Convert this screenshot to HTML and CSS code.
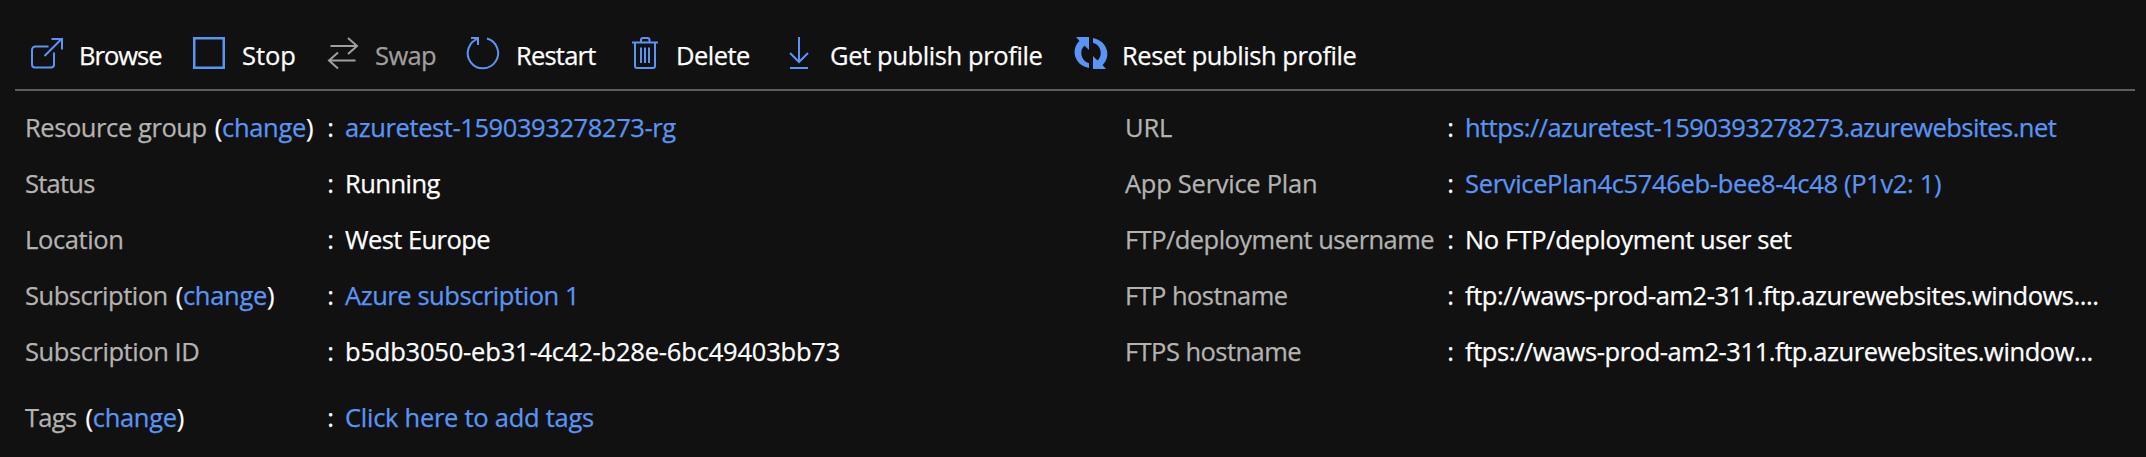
FILE: index.html
```html
<!DOCTYPE html>
<html lang="en">
<head>
<meta charset="utf-8">
<title>App Service</title>
<link rel="stylesheet" href="styles.css">
</head>
<body>
<nav class="toolbar">
  <a class="command"><svg class="icon" viewBox="0 0 32 32"><path d="M17.5 9.5H4.5a3.5 3.5 0 0 0-3.5 3.5v14.5a3 3 0 0 0 3 3h16a3 3 0 0 0 3-3V15.500M13.500 19 31 1.500M20.500 2H31v10.500"/></svg><span class="browse">Browse</span></a>
  <a class="command"><svg class="icon square" viewBox="0 0 32 32"><path d="M1.250 1.250h29.500v29.500H1.250z"/></svg><span class="stop">Stop</span></a>
  <a class="command disabled"><svg class="icon" viewBox="0 0 32 32"><path d="M3.500 9H30M21 1l9 8-9 8M28.500 23.500H2.500M11 15.500l-9 8 9 8"/></svg><span class="swap">Swap</span></a>
  <a class="command"><svg class="icon" viewBox="0 0 32 32"><path d="M20 1.500A15.200 15.200 0 1 1 11.500 1.600M4 1h7v7"/></svg><span class="restart">Restart</span></a>
  <a class="command"><svg class="icon" viewBox="0 0 32 32"><path d="M3 5.500h26M6 5.500V29q0 2 2 2h16q2 0 2-2V5.500M12 5V3q0-2 2-2h4.500q2 0 2 2v2M12 10.500v15.500M16 10.500v15.500M20 10.500v15.500"/></svg><span class="delete">Delete</span></a>
  <a class="command"><svg class="icon" viewBox="0 0 32 32"><path d="M16 0v25.500M7 16l9 9 9-9M7 31h18"/></svg><span class="get">Get publish profile</span></a>
  <a class="command"><svg class="icon filled" viewBox="0 0 32 32"><path d="M1 0h13v13l-4.500-4.500C4 13 5.500 24 14 26.200V31C-1 28-4.500 12 4.500 4zM31 32H18V19l4.500 4.500C28 19 26.500 8 18 5.800V1C33 4 36.500 20 27.500 28z"/></svg><span class="reset">Reset publish profile</span></a>
</nav>
<main class="essentials">
  <dl class="column">
    <div class="row"><dt><span class="group">Resource group</span><span class="change">(<a>change</a>)</span></dt><dd class="link group-value">azuretest-1590393278273-rg</dd></div>
    <div class="row"><dt><span class="status">Status</span></dt><dd class="running">Running</dd></div>
    <div class="row"><dt><span class="location">Location</span></dt><dd class="region">West Europe</dd></div>
    <div class="row"><dt><span class="subscription">Subscription</span><span class="change">(<a>change</a>)</span></dt><dd class="link subscription-value">Azure subscription 1</dd></div>
    <div class="row"><dt><span class="subscription-id">Subscription ID</span></dt><dd class="guid">b5db3050-eb31-4c42-b28e-6bc49403bb73</dd></div>
    <div class="row tags-row"><dt><span class="tags">Tags</span><span class="change">(<a>change</a>)</span></dt><dd class="link add-tags">Click here to add tags</dd></div>
  </dl>
  <dl class="column">
    <div class="row"><dt><span class="url">URL</span></dt><dd class="link url-value">https://azuretest-1590393278273.azurewebsites.net</dd></div>
    <div class="row"><dt><span class="plan">App Service Plan</span></dt><dd class="link plan-value">ServicePlan4c5746eb-bee8-4c48 (P1v2: 1)</dd></div>
    <div class="row"><dt><span class="ftp-user">FTP/deployment username</span></dt><dd class="ftp-user-value">No FTP/deployment user set</dd></div>
    <div class="row"><dt><span class="ftp">FTP hostname</span></dt><dd class="ftp-value">ftp://waws-prod-am2-311.ftp.azurewebsites.windows....</dd></div>
    <div class="row"><dt><span class="ftps">FTPS hostname</span></dt><dd class="ftps-value">ftps://waws-prod-am2-311.ftp.azurewebsites.window...</dd></div>
  </dl>
</main>
</body>
</html>
```
FILE: styles.css
```css
* { box-sizing: border-box; }
body {
  margin: 0;
  height: 457px;
  overflow: hidden;
  background: #111;
  color: #fff;
  font: 25.5px/56px "Open Sans", "Noto Sans", sans-serif;
  -webkit-text-stroke: .25px currentColor;
  white-space: nowrap;
}
.toolbar {
  display: grid;
  grid-template-columns: 162px 134px 140px 162px 154px 292px auto;
  height: 91px;
  margin: 0 11px 0 15px;
  padding: 27px 0 0 16px;
  border-bottom: 2px solid #605e5d;
}
.command { display: flex; gap: 16px; height: 56px; }
.icon {
  flex: none;
  width: 32px;
  height: 32px;
  margin-top: 10px;
  fill: none;
  stroke: #5a95f5;
  stroke-width: 2;
  overflow: visible;
}
.square { stroke-width: 2.5; }
.filled { fill: #5a95f5; stroke: none; }
.disabled { color: #a19f9d; }
.disabled .icon { stroke: #a19f9d; }

.essentials { display: grid; grid-template-columns: 1100px 1fr; padding: 8px 0 0 25px; }
.column { margin: 0; }
.row { display: grid; grid-template-columns: 308px 1fr; }
.column + .column .row { grid-template-columns: 328px 1fr; }
.tags-row { margin-top: 10px; }
dt { display: flex; gap: 9px; color: #b5b3b1; }
dt::after { content: ":"; color: #fff; margin: 0 -1px 0 auto; }
dd { margin: 0 0 0 12px; }
.change { color: #fff; letter-spacing: -.3px; }
.link, .change a { color: #5a95f5; }

.browse { letter-spacing: -.97px; }
.stop { letter-spacing: -.04px; margin-left: 1px; }
.swap { letter-spacing: -.6px; }
.restart { letter-spacing: -.78px; margin-left: 1px; }
.delete { letter-spacing: -.54px; margin-left: -1px; }
.get { letter-spacing: -.39px; margin-left: -1px; }
.reset { letter-spacing: -.43px; margin-left: -1px; }
.group { letter-spacing: -.42px; margin-right: -1px; }
.status { letter-spacing: -.75px; }
.location { letter-spacing: -.37px; }
.subscription { letter-spacing: -.49px; margin-right: -1px; }
.subscription-id { letter-spacing: -.43px; }
.tags { letter-spacing: -.68px; }
.group-value { letter-spacing: -.41px; }
.running { letter-spacing: -.53px; }
.region { letter-spacing: -.56px; }
.subscription-value { letter-spacing: -.45px; }
.guid { letter-spacing: -.2px; }
.add-tags { letter-spacing: -.27px; }
.url { letter-spacing: -.13px; }
.plan { letter-spacing: -.27px; }
.ftp-user { letter-spacing: -.54px; }
.ftp, .ftps { letter-spacing: -.55px; }
.url-value { letter-spacing: -.56px; }
.plan-value { letter-spacing: -.33px; }
.ftp-user-value { letter-spacing: -.41px; }
.ftp-value { letter-spacing: -.45px; }
.ftps-value { letter-spacing: -.44px; }
```
